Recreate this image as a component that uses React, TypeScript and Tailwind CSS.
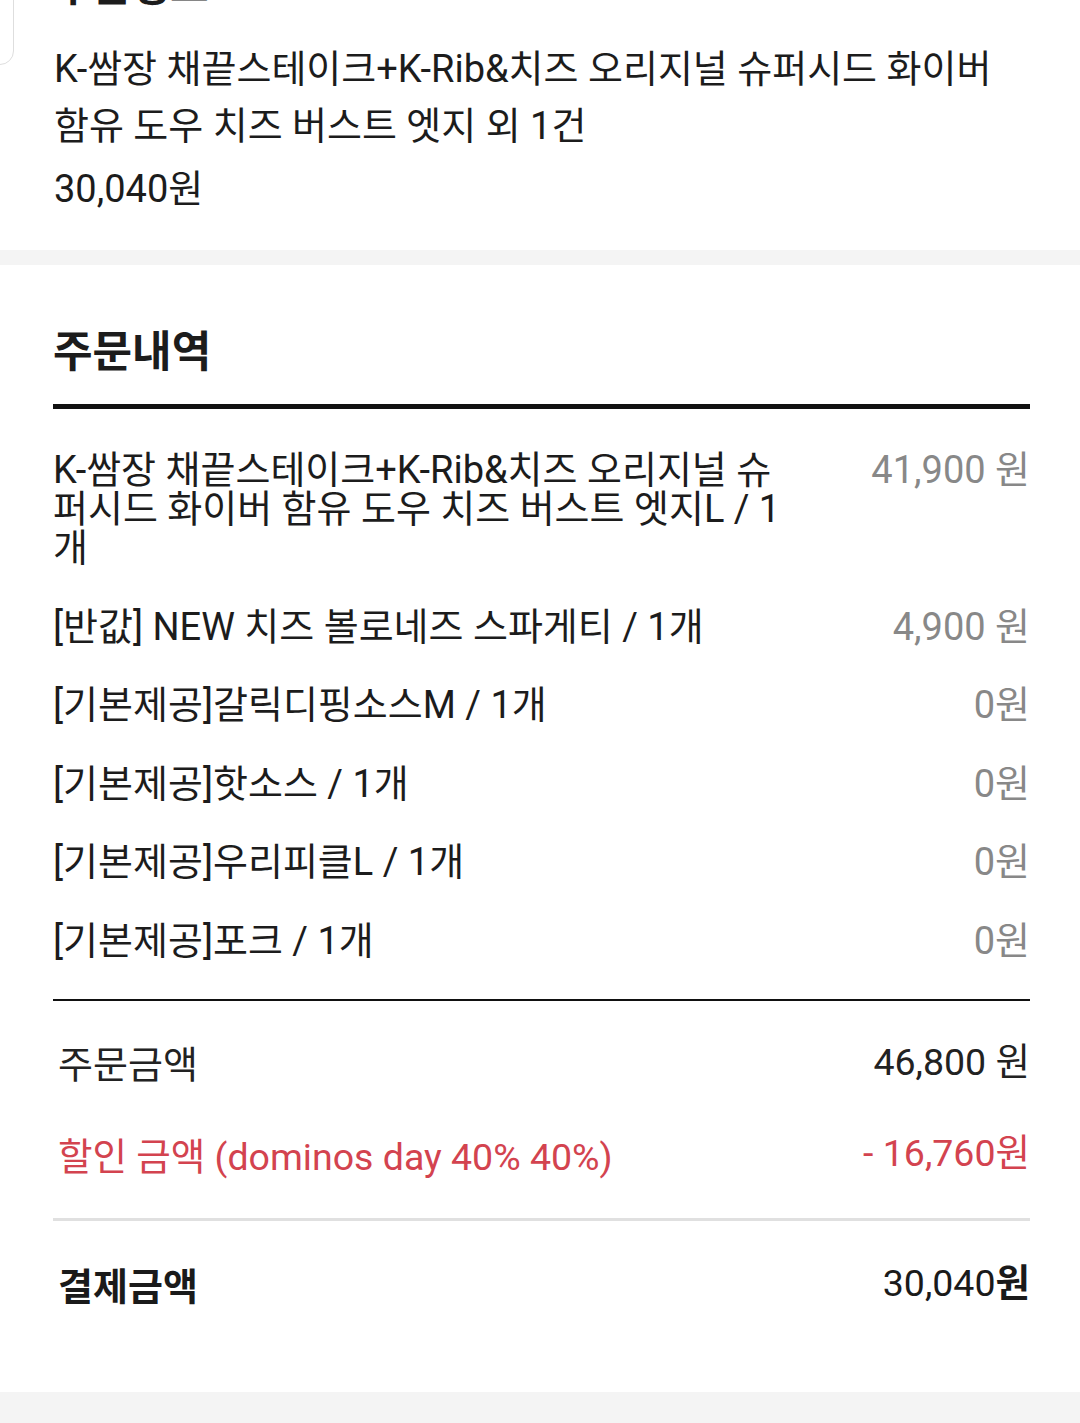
const font = "font-['Roboto','Noto_Sans_CJK_KR',sans-serif]";

const items = [
  { name: "K-쌈장 채끝스테이크+K-Rib&치즈 오리지널 슈퍼시드 화이버 함유 도우 치즈 버스트 엣지L / 1개", price: "41,900 원" },
  { name: "[반값] NEW 치즈 볼로네즈 스파게티 / 1개", price: "4,900 원" },
  { name: "[기본제공]갈릭디핑소스M / 1개", price: "0원" },
  { name: "[기본제공]핫소스 / 1개", price: "0원" },
  { name: "[기본제공]우리피클L / 1개", price: "0원" },
  { name: "[기본제공]포크 / 1개", price: "0원" },
];

export default function App() {
  return (
    <div className={`${font} relative w-[1080px] h-[1423px] overflow-hidden bg-white text-[#1c1c1c]`}>
      {/* floating tab on the left edge */}
      <div className="absolute -left-[30px] -top-[20px] w-[44px] h-[85px] rounded-[14px] border border-[#dedede] bg-white" />

      {/* 주문정보 (scrolled) */}
      <section className="px-[54px] pb-[32px]">
        <h2 className="-mt-[37px] text-[42px] font-bold leading-[48px]">주문정보</h2>
        <p className="mt-[30px] break-keep text-[38px] leading-[57px]">
          K-쌈장 채끝스테이크+K-Rib&치즈 오리지널 슈퍼시드 화이버 함유 도우 치즈 버스트 엣지 외 1건
        </p>
        <p className="mt-[6px] text-[38px] leading-[57px]">30,040원</p>
      </section>

      <div className="h-[15px] bg-[#f4f4f4]" />

      {/* 주문내역 */}
      <section className="pl-[53px] pr-[50px] pt-[62px]">
        <h2 className="text-[43px] font-bold leading-[50px]">주문내역</h2>
        <div className="mt-[27px] h-[5px] bg-[#111]" />

        <ul className="pt-[42px] flex flex-col gap-[39.5px]">
          {items.map((item) => (
            <li key={item.name} className="flex items-start justify-between">
              <span className="w-[740px] break-all text-[38px] leading-[39px]">{item.name}</span>
              <span className="text-[38px] leading-[39px] text-[#888] whitespace-nowrap">{item.price}</span>
            </li>
          ))}
        </ul>

        <div className="mt-[38px] h-[2px] bg-[#111]" />

        <div className="flex items-center justify-between pl-[5px] pt-[40px]">
          <span className="text-[38px] leading-[48px] text-[#222]">주문금액</span>
          <span className="text-[37.5px] leading-[48px] -mt-[6px] text-[#222]">46,800 원</span>
        </div>
        <div className="flex items-center justify-between pl-[5px] pt-[44px]">
          <span className="text-[37.5px] leading-[48px] text-[#d3434f]">할인 금액 (dominos day 40% 40%)</span>
          <span className="text-[37.5px] leading-[48px] -mt-[8px] text-[#d3434f]">- 16,760원</span>
        </div>

        <div className="mt-[37px] h-[3px] bg-[#e0e0e0]" />

        <div className="flex items-center justify-between pl-[5px] pt-[42px]">
          <span className="text-[38px] font-bold leading-[48px] text-[#1a1a1a]">결제금액</span>
          <span className="text-[37.5px] leading-[48px] -mt-[8px] text-[#1a1a1a]">
            30,040<span className="font-bold">원</span>
          </span>
        </div>
      </section>

      <div className="absolute left-0 right-0 top-[1392px] h-[31px] bg-[#f4f4f4]" />
    </div>
  );
}
